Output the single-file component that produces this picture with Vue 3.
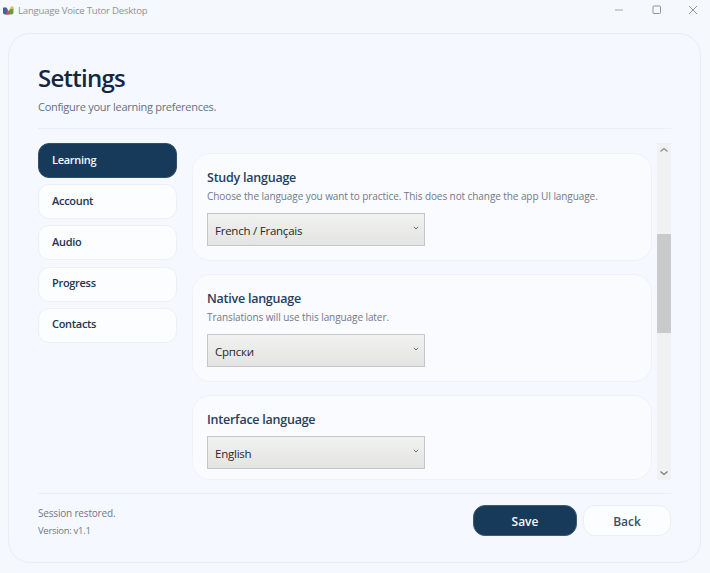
<script setup>
const navItems = ['Learning', 'Account', 'Audio', 'Progress', 'Contacts']
const cards = [
  { title: 'Study language', hint: 'Choose the language you want to practice. This does not change the app UI language.', value: 'French / Français' },
  { title: 'Native language', hint: 'Translations will use this language later.', value: 'Српски' },
  { title: 'Interface language', hint: '', value: 'English' },
]
</script>

<template>
  <div class="window">
    <header class="titlebar">
      <svg class="logo" width="11" height="9" viewBox="0 0 11 9">
        <path d="M0 1.500h3.500L5.500 5v3.500H2a2 2 0 0 1-2-2z" fill="#3f5fa8" />
        <path d="M3.500 3L5.500 5.500 7 3v5.500H3.500z" fill="#c9564a" />
        <path d="M7 2.500h3.500v4a2 2 0 0 1-2 2H7z" fill="#6c9a48" />
        <path d="M7.500 0.500h3v2.500h-3z" fill="#e6b83f" />
      </svg>
      <span class="app-name">Language Voice Tutor Desktop</span>
      <div class="controls">
        <svg width="10" height="10" viewBox="0 0 10 10"><path d="M0 5h8" stroke="#a2a6ac" fill="none" /></svg>
        <svg width="10" height="10" viewBox="0 0 10 10"><rect x="1" y="1" width="7.500" height="7.500" rx="1" stroke="#8f9399" fill="none" /></svg>
        <svg width="10" height="10" viewBox="0 0 10 10"><path d="M1 1l8 8M9 1l-8 8" stroke="#8f9399" fill="none" /></svg>
      </div>
    </header>

    <main class="panel">
      <h1 class="title">Settings</h1>
      <p class="subtitle">Configure your learning preferences.</p>
      <div class="divider top"></div>

      <div class="body">
        <nav class="nav">
          <button v-for="(item, i) in navItems" :key="item" class="nav-item" :class="{ active: i === 0 }">{{ item }}</button>
        </nav>

        <div class="scroller">
          <div class="cards">
            <section v-for="card in cards" :key="card.title" class="card">
              <h2 class="card-title">{{ card.title }}</h2>
              <p v-if="card.hint" class="hint">{{ card.hint }}</p>
              <div class="select">
                <span>{{ card.value }}</span>
                <svg width="6" height="4" viewBox="0 0 6 4"><path d="M0.800 0.800L3 3l2.200-2.200" stroke="#6a6e74" stroke-width="1" fill="none" /></svg>
              </div>
            </section>
          </div>
          <div class="scrollbar">
            <svg class="arrow" width="10" height="6" viewBox="0 0 10 6"><path d="M1.500 4.500L5 1.500l3.500 3" stroke="#8a8a8a" stroke-width="1.200" fill="none" /></svg>
            <div class="track"><div class="thumb"></div></div>
            <svg class="arrow" width="10" height="6" viewBox="0 0 10 6"><path d="M1.500 1.500L5 4.500l3.500-3" stroke="#777" stroke-width="1.200" fill="none" /></svg>
          </div>
        </div>
      </div>

      <div class="divider bottom"></div>
      <footer class="footer">
        <div class="status">
          <span class="session">Session restored.</span>
          <span class="version">Version: v1.1</span>
        </div>
        <div class="actions">
          <button class="btn save">Save</button>
          <button class="btn back">Back</button>
        </div>
      </footer>
    </main>
  </div>
</template>

<style>
html, body { margin: 0; background: #f5f8fd; }
</style>

<style scoped>
.window {
  width: 710px;
  height: 573px;
  box-sizing: border-box;
  background: #f5f8fd;
  font-family: "Open Sans", "Noto Sans", sans-serif;
  display: flex;
  flex-direction: column;
  overflow: hidden;
}
.titlebar {
  height: 33px;
  flex: none;
  display: flex;
  align-items: flex-start;
  padding: 5px 12px 0 3px;
  box-sizing: border-box;
}
.logo { margin-top: 1px; margin-right: 4px; }
.app-name { font-size: 9.600px; letter-spacing: -0.23px; line-height: 12px; color: #8e939b; }
.controls {
  margin-left: auto;
  display: flex;
  gap: 26.500px;
}
.panel {
  margin: 0 9px 10px 8px;
  flex: 1;
  min-height: 0;
  border: 1px solid #e8eef6;
  border-radius: 22px;
  background: #f5f8fe;
  padding: 27px 29px 0;
  display: flex;
  flex-direction: column;
}
.title {
  margin: 0;
  font-size: 24px;
  letter-spacing: -0.75px;
  line-height: 34px;
  font-weight: 600;
  color: #14273f;
}
.subtitle {
  margin: 4px 0 0;
  font-size: 11px;
  letter-spacing: -0.28px;
  line-height: 16px;
  color: #67717f;
}
.divider { height: 1px; background: #e9eff7; flex: none; }
.divider.top { margin-top: 13px; }
.divider.bottom { margin-top: 13px; }
.body {
  margin-top: 14px;
  height: 337px;
  flex: none;
  display: flex;
  gap: 15px;
}
.nav {
  width: 139px;
  flex: none;
  display: flex;
  flex-direction: column;
  gap: 6.200px;
}
.nav-item {
  height: 35px;
  box-sizing: border-box;
  border: 1px solid #edf1f7;
  border-radius: 11px;
  background: #fbfdff;
  color: #22364f;
  font: 600 11px "Open Sans", sans-serif;
  letter-spacing: -0.3px;
  text-align: left;
  padding: 0 13px 3px;
}
.nav-item.active {
  background: #183a5a;
  border-color: #2d4e6e;
  color: #f4f8fc;
}
.scroller {
  flex: 1;
  min-width: 0;
  display: flex;
  gap: 5px;
  overflow: hidden;
}
.cards {
  flex: 1;
  min-width: 0;
  padding-top: 10px;
  display: flex;
  flex-direction: column;
  gap: 13px;
  overflow: hidden;
}
.card {
  flex: none;
  box-sizing: border-box;
  border: 1px solid #eef2f8;
  border-radius: 18px;
  background: #f9fbff;
  padding: 14px;
}
.card:last-child { padding-bottom: 10px; }
.card-title {
  margin: 0.500px 0 0;
  font-size: 12.500px;
  letter-spacing: -0.24px;
  line-height: 18px;
  font-weight: 600;
  color: #26405c;
}
.hint {
  margin: 2.500px 0 0;
  font-size: 10px;
  letter-spacing: -0.08px;
  line-height: 15px;
  color: #707a87;
}
.select {
  margin-top: 9px;
  width: 218px;
  height: 33px;
  box-sizing: border-box;
  border: 1px solid #c4c6c9;
  background: linear-gradient(#f1f1f0, #e4e4e3);
  display: flex;
  align-items: center;
  justify-content: space-between;
  padding: 1px 5px 0 7px;
  font-size: 11.500px;
  letter-spacing: -0.24px;
  color: #26282b;
}
.select svg { margin-top: -5px; }
.card:last-child .select { margin-top: 7.500px; }
.scrollbar {
  width: 14px;
  flex: none;
  background: #f0f1f3;
  display: flex;
  flex-direction: column;
  align-items: center;
}
.arrow { flex: none; margin: 4px 0; }
.track { flex: 1; width: 100%; padding-top: 77px; box-sizing: border-box; }
.thumb { height: 99px; background: #c9cacc; }
.footer {
  margin-top: 11px;
  display: flex;
  justify-content: space-between;
  align-items: flex-start;
}
.status { display: flex; flex-direction: column; padding-top: 1px; gap: 4px; }
.session { font-size: 10px; letter-spacing: -0.18px; line-height: 14px; color: #6f7986; }
.version { font-size: 9.500px; letter-spacing: -0.3px; line-height: 14px; color: #6f7986; }
.actions { display: flex; gap: 6px; }
.btn {
  height: 31px;
  box-sizing: border-box;
  border-radius: 12px;
  padding-top: 2px;
  font: 600 12px "Open Sans", sans-serif;
}
.save {
  width: 104px;
  background: #183a5a;
  border: 1px solid #3a5a78;
  color: #f4f8fc;
}
.back {
  width: 88px;
  background: #fcfdff;
  border: 1px solid #eaeff6;
  color: #3e4f63;
}
</style>
